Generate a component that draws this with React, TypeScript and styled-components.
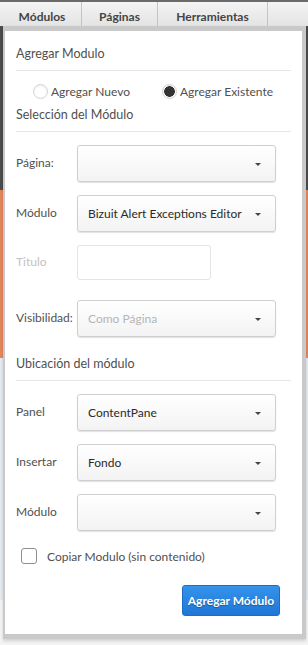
import React from "react";
import styled, { createGlobalStyle } from "styled-components";

const FONT = `Lato, "Open Sans", "Liberation Sans", sans-serif`;

const GlobalStyle = createGlobalStyle`
  html, body {
    margin: 0;
    padding: 0;
    background: #ffffff;
  }
  body {
    font-family: ${FONT};
    -webkit-font-smoothing: antialiased;
  }
`;

interface SelectProps {
  value?: string;
  muted?: boolean;
}

const Select: React.FC<SelectProps> = ({ value, muted }) => (
  <StyledSelect>
    <StyledSelectText $muted={muted}>{value}</StyledSelectText>
    <StyledCaret />
  </StyledSelect>
);

interface FieldRowProps {
  label: string;
  disabled?: boolean;
  children: React.ReactNode;
}

const FieldRow: React.FC<FieldRowProps> = ({ label, disabled, children }) => (
  <StyledRow>
    <StyledLabel $disabled={disabled}>{label}</StyledLabel>
    {children}
  </StyledRow>
);

const App: React.FC = () => {
  return (
    <>
      <GlobalStyle />
      <StyledPage>
        <StyledTabBar>
          <StyledTab $width={79}>Módulos</StyledTab>
          <StyledTab $width={76}>Páginas</StyledTab>
          <StyledTab $width={110}>Herramientas</StyledTab>
        </StyledTabBar>

        <StyledPanel>
          <StyledSectionTitle>Agregar Modulo</StyledSectionTitle>
          <StyledDivider />
          <StyledRadioGroup>
            <StyledRadioOption $width={129}>
              <StyledRadio />
              <span>Agregar Nuevo</span>
            </StyledRadioOption>
            <StyledRadioOption>
              <StyledRadio $checked />
              <span>Agregar Existente</span>
            </StyledRadioOption>
          </StyledRadioGroup>
          <StyledSectionTitle $top={0}>Selección del Módulo</StyledSectionTitle>
          <StyledDivider />

          <StyledFields>
            <FieldRow label="Página:">
              <Select />
            </FieldRow>
            <FieldRow label="Módulo">
              <Select value="Bizuit Alert Exceptions Editor" />
            </FieldRow>
            <FieldRow label="Titulo" disabled>
              <StyledInput />
            </FieldRow>
            <StyledSpacer />
            <FieldRow label="Visibilidad:">
              <Select value="Como Página" muted />
            </FieldRow>
          </StyledFields>

          <StyledSectionTitle $top={18}>Ubicación del módulo</StyledSectionTitle>
          <StyledDivider />

          <StyledFields>
            <FieldRow label="Panel">
              <Select value="ContentPane" />
            </FieldRow>
            <FieldRow label="Insertar">
              <Select value="Fondo" />
            </FieldRow>
            <FieldRow label="Módulo">
              <Select />
            </FieldRow>
          </StyledFields>

          <StyledCheckRow>
            <StyledCheckbox />
            <span>Copiar Modulo (sin contenido)</span>
          </StyledCheckRow>

          <StyledActions>
            <StyledButton>Agregar Módulo</StyledButton>
          </StyledActions>
        </StyledPanel>
      </StyledPage>
    </>
  );
};

export default App;

const StyledPage = styled.div`
  width: 308px;
  height: 645px;
  overflow: hidden;
  background: linear-gradient(
    to bottom,
    #4c4c4c 0,
    #4c4c4c 190px,
    #e4875b 190px,
    #e4875b 358px,
    #e6ebf0 358px,
    #e6ebf0 600px,
    #f4f4f4 600px
  );
`;

const StyledTabBar = styled.div`
  height: 26px;
  display: flex;
  padding-left: 3px;
  border-top: 2px solid #6a6a6a;
  box-sizing: border-box;
  background: linear-gradient(to bottom, #f4f4f4, #e3e3e3);
`;

const StyledTab = styled.div<{ $width: number }>`
  width: ${(p) => p.$width}px;
  flex-shrink: 0;
  display: flex;
  align-items: center;
  justify-content: center;
  padding-top: 5px;
  box-sizing: border-box;
  border-right: 1px solid #c4c4c4;
  font-size: 12px;
  font-weight: 700;
  color: #444444;
`;

const StyledPanel = styled.div`
  margin-left: 3px;
  width: 303px;
  box-sizing: border-box;
  background: #ffffff;
  border-style: solid;
  border-color: #c9c9c9;
  border-width: 5px 4px 5px 2px;
  padding: 0 11px 18px 11px;
  box-shadow: 0 2px 3px rgba(0, 0, 0, 0.15);
`;

const StyledSectionTitle = styled.div<{ $top?: number }>`
  padding-top: ${(p) => (p.$top !== undefined ? p.$top : 14)}px;
  padding-bottom: 8px;
  font-size: 12.5px;
  line-height: 17px;
  color: #505050;
`;

const StyledDivider = styled.div`
  height: 1px;
  background: #e6e6e6;
`;

const StyledRadioGroup = styled.div`
  display: flex;
  align-items: center;
  padding: 12px 0 6px 17px;
`;

const StyledRadioOption = styled.label<{ $width?: number }>`
  display: flex;
  align-items: center;
  gap: 3px;
  width: ${(p) => (p.$width ? `${p.$width}px` : "auto")};
  font-size: 12px;
  line-height: 17px;
  color: #505050;
`;

const StyledRadio = styled.span<{ $checked?: boolean }>`
  width: 15px;
  height: 15px;
  border-radius: 50%;
  box-sizing: border-box;
  border: 1px solid #d2d2d2;
  background: ${(p) =>
    p.$checked ? "radial-gradient(circle, #333 0, #333 5px, #fff 5.6px)" : "#fff"};
  box-shadow: inset 0 1px 2px rgba(0, 0, 0, 0.08);
`;

const StyledFields = styled.div`
  display: flex;
  flex-direction: column;
  gap: 13px;
  padding-top: 13px;
`;

const StyledSpacer = styled.div`
  height: 7px;
  margin-top: -13px;
`;

const StyledRow = styled.div`
  display: flex;
  align-items: center;
`;

const StyledLabel = styled.div<{ $disabled?: boolean }>`
  width: 61px;
  flex-shrink: 0;
  margin-top: -3px;
  font-size: 12px;
  color: ${(p) => (p.$disabled ? "#c2c2c2" : "#505050")};
`;

const StyledSelect = styled.div`
  width: 199px;
  height: 37px;
  box-sizing: border-box;
  display: flex;
  align-items: center;
  padding: 0 14px 0 10px;
  border: 1px solid #cfcfcf;
  border-radius: 3px;
  background: linear-gradient(to bottom, #ffffff, #f3f3f3);
  box-shadow: 0 1px 1px rgba(0, 0, 0, 0.12);
`;

const StyledSelectText = styled.span<{ $muted?: boolean }>`
  flex: 1;
  font-size: 12px;
  color: ${(p) => (p.$muted ? "#b5b5b5" : "#2a2a2a")};
  white-space: nowrap;
  overflow: hidden;
`;

const StyledCaret = styled.span`
  width: 0;
  height: 0;
  margin-top: 2px;
  border-top: 3px solid #444;
  border-left: 3.5px solid transparent;
  border-right: 3.5px solid transparent;
`;

const StyledInput = styled.div`
  width: 134px;
  height: 35px;
  box-sizing: border-box;
  border: 1px solid #e4e4e4;
  border-radius: 3px;
  background: #ffffff;
`;

const StyledCheckRow = styled.label`
  display: flex;
  align-items: center;
  gap: 10px;
  padding: 17px 0 0 5px;
  font-size: 12px;
  color: #505050;
`;

const StyledCheckbox = styled.span`
  width: 16px;
  height: 16px;
  box-sizing: border-box;
  border: 1px solid #8e8e8e;
  border-radius: 3px;
  background: #ffffff;
`;

const StyledActions = styled.div`
  display: flex;
  justify-content: flex-end;
  padding: 21px 11px 0 0;
`;

const StyledButton = styled.button`
  width: 98px;
  height: 31px;
  border: 1px solid #1d6cc6;
  border-radius: 3px;
  background: linear-gradient(to bottom, #3593ea, #1f76d6);
  color: #ffffff;
  font-family: ${FONT};
  font-size: 12px;
  font-weight: 700;
  text-shadow: 0 1px 1px rgba(0, 0, 0, 0.3);
  padding: 0;
  cursor: pointer;
`;
